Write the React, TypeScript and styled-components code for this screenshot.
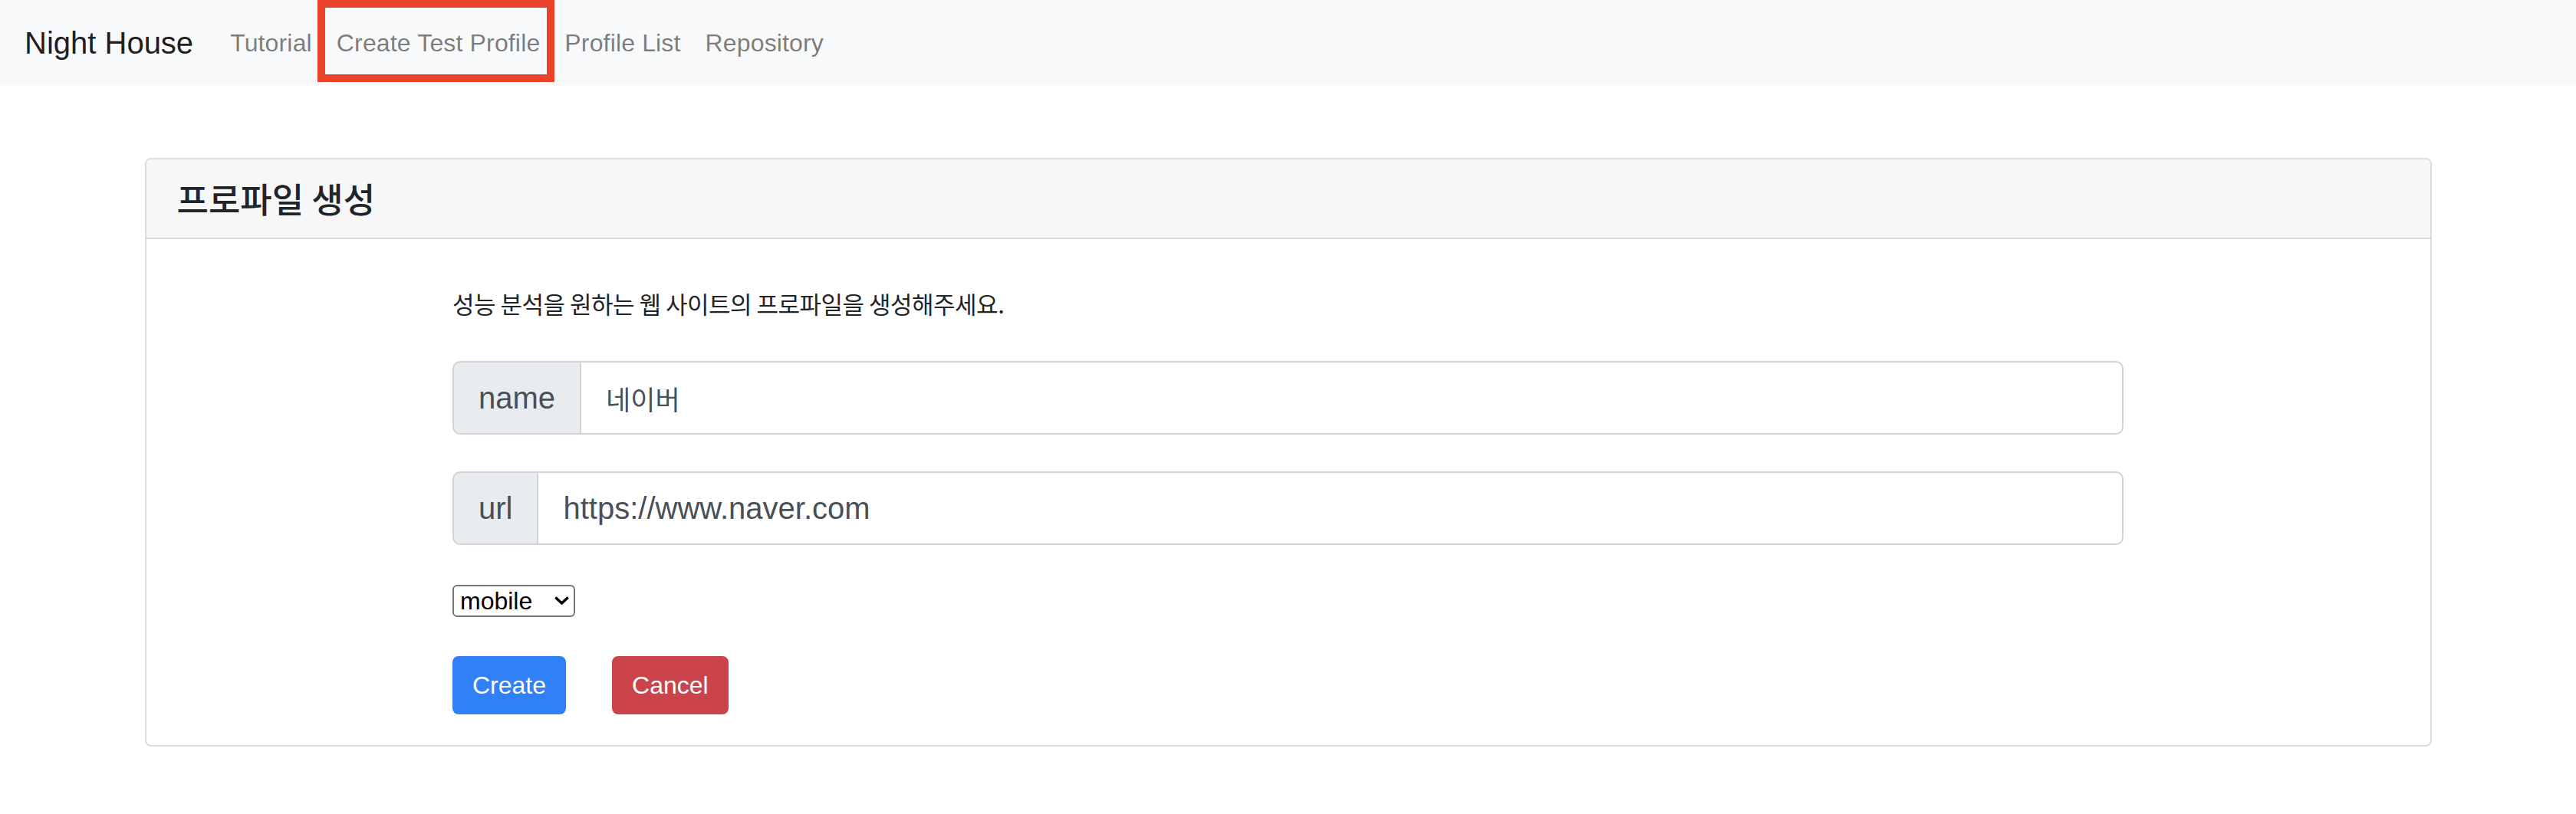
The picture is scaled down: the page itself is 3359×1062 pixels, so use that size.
import React from "react";
import styled, { createGlobalStyle } from "styled-components";

const GlobalStyle = createGlobalStyle`
  html, body {
    margin: 0;
    padding: 0;
    background: #ffffff;
    font-family: "Liberation Sans", "Noto Sans CJK KR", Arial, sans-serif;
    color: #212529;
  }
  * { box-sizing: border-box; }
`;

const Navbar = styled.nav`
  display: flex;
  align-items: center;
  height: 111px;
  padding: 0 32px;
  background: #f8f9fa;
`;

const Brand = styled.a`
  font-size: 40px;
  line-height: 60px;
  padding: 10px 0;
  margin-right: 32px;
  color: rgba(0, 0, 0, 0.9);
  text-decoration: none;
  white-space: nowrap;
`;

const NavList = styled.div`
  display: flex;
  align-items: center;
`;

const NavLink = styled.a<{ $highlight?: boolean }>`
  position: relative;
  display: block;
  font-size: 32px;
  line-height: 48px;
  letter-spacing: 0.15px;
  padding: 16px;
  color: rgba(0, 0, 0, 0.5);
  text-decoration: none;
  white-space: nowrap;

  ${(p) =>
    p.$highlight &&
    `
    &::after {
      content: "";
      position: absolute;
      top: -16px;
      left: -9px;
      right: -3px;
      bottom: -11px;
      border: 10px solid #e9432a;
      pointer-events: none;
    }
  `}
`;

const Main = styled.main`
  padding-top: 95px;
`;

const Card = styled.section`
  width: 2982px;
  margin: 0 auto;
  border: 2px solid #dcdcdc;
  border-radius: 8px;
  background: #fff;
  overflow: hidden;
`;

const CardHeader = styled.header`
  padding: 24px 40px;
  background: #f7f7f7;
  border-bottom: 2px solid #dcdcdc;
`;

const CardTitle = styled.h4`
  margin: 0;
  font-family: "Noto Sans CJK KR", sans-serif;
  font-size: 45px;
  font-weight: 500;
  line-height: 54px;
  color: #212529;
`;

const CardBody = styled.div`
  padding: 40px;
`;

const FormColumn = styled.form`
  width: 2179px;
  margin: 0 auto;
  display: flex;
  flex-direction: column;
  align-items: flex-start;
`;

const Description = styled.p`
  margin: 20px 0 51px;
  font-family: "Noto Sans CJK KR", sans-serif;
  font-size: 31px;
  letter-spacing: -0.5px;
  line-height: 48px;
  color: #212529;
`;

const InputGroup = styled.div<{ $gap: number }>`
  display: flex;
  align-items: stretch;
  width: 100%;
  height: 96px;
  margin-bottom: ${(p) => p.$gap}px;
`;

const Addon = styled.span`
  display: flex;
  align-items: center;
  padding: 0 32px;
  font-size: 40px;
  color: #495057;
  background: #e9ecef;
  border: 2px solid #ced4da;
  border-radius: 10px 0 0 10px;
  white-space: nowrap;
`;

const TextInput = styled.input<{ $korean?: boolean }>`
  flex: 1;
  min-width: 0;
  margin-left: -2px;
  padding: 0 32px;
  font-family: ${(p) =>
    p.$korean ? `"Noto Sans CJK KR", sans-serif` : `"Liberation Sans", Arial, sans-serif`};
  font-size: ${(p) => (p.$korean ? "35px" : "40px")};
  color: #495057;
  background: #fff;
  border: 2px solid #ced4da;
  border-radius: 0 10px 10px 0;
  outline: none;
`;

const SelectWrap = styled.div`
  position: relative;
  display: inline-flex;
  margin-bottom: 51px;
`;

const Select = styled.select`
  appearance: none;
  -webkit-appearance: none;
  width: 160px;
  height: 42px;
  padding: 0 40px 0 8px;
  font-family: "Liberation Sans", Arial, sans-serif;
  font-size: 32px;
  color: #000;
  background: #fff;
  border: 2px solid #767676;
  border-radius: 6px;
  outline: none;
`;

const Chevron = styled.svg`
  position: absolute;
  right: 8px;
  top: 15px;
  width: 19px;
  height: 12px;
  pointer-events: none;
`;

const ButtonRow = styled.div`
  display: flex;
  gap: 60px;
`;

const Button = styled.button<{ $variant: "primary" | "danger" }>`
  font-family: "Liberation Sans", Arial, sans-serif;
  font-size: 32px;
  line-height: 48px;
  padding: 12px 24px;
  color: #fff;
  border-radius: 8px;
  border: 2px solid
    ${(p) => (p.$variant === "primary" ? "#3080f7" : "#cb444b")};
  background: ${(p) => (p.$variant === "primary" ? "#3080f7" : "#cb444b")};
  cursor: pointer;
`;

export default function App() {
  return (
    <>
      <GlobalStyle />
      <Navbar>
        <Brand href="#">Night House</Brand>
        <NavList>
          <NavLink href="#">Tutorial</NavLink>
          <NavLink href="#" $highlight>
            Create Test Profile
          </NavLink>
          <NavLink href="#">Profile List</NavLink>
          <NavLink href="#">Repository</NavLink>
        </NavList>
      </Navbar>
      <Main>
        <Card>
          <CardHeader>
            <CardTitle>프로파일 생성</CardTitle>
          </CardHeader>
          <CardBody>
            <FormColumn onSubmit={(e) => e.preventDefault()}>
              <Description>성능 분석을 원하는 웹 사이트의 프로파일을 생성해주세요.</Description>
              <InputGroup $gap={48}>
                <Addon>name</Addon>
                <TextInput $korean defaultValue="네이버" />
              </InputGroup>
              <InputGroup $gap={52}>
                <Addon>url</Addon>
                <TextInput defaultValue="https://www.naver.com" />
              </InputGroup>
              <SelectWrap>
                <Select defaultValue="mobile">
                  <option value="mobile">mobile</option>
                  <option value="desktop">desktop</option>
                </Select>
                <Chevron viewBox="0 0 19 12">
                  <path
                    d="M2.5 2.5 L9.5 9 L16.5 2.5"
                    fill="none"
                    stroke="#000"
                    strokeWidth="3.6"
                    strokeLinecap="round"
                    strokeLinejoin="round"
                  />
                </Chevron>
              </SelectWrap>
              <ButtonRow>
                <Button type="submit" $variant="primary">
                  Create
                </Button>
                <Button type="button" $variant="danger">
                  Cancel
                </Button>
              </ButtonRow>
            </FormColumn>
          </CardBody>
        </Card>
      </Main>
    </>
  );
}
